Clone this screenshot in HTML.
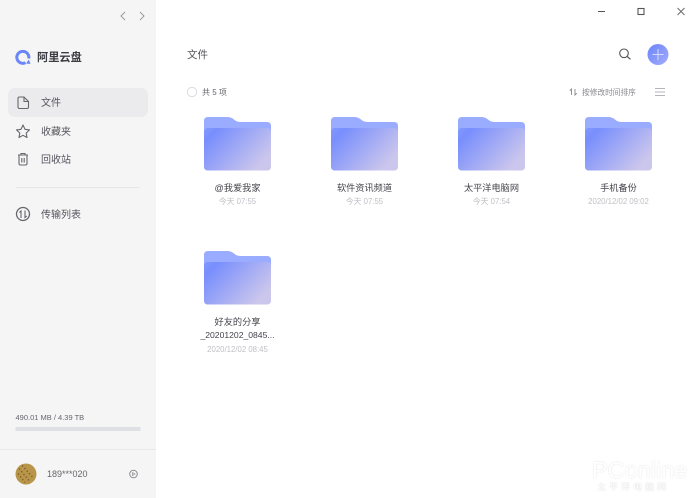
<!DOCTYPE html>
<html><head><meta charset="utf-8"><style>
html,body{margin:0;padding:0;width:700px;height:498px;overflow:hidden;background:#fff;font-family:"Liberation Sans","Noto Sans CJK SC",sans-serif}
.a{position:absolute;white-space:nowrap}
#side{position:absolute;left:0;top:0;width:156px;height:498px;background:#f5f5f5}
.nav{font-size:10px;color:#55555f;left:41px;line-height:14px}
.name{font-size:9.2px;color:#44444c;width:127px;text-align:center;line-height:14px}
.date{font-size:7.800px;color:#c0c0c6;width:127px;text-align:center;line-height:12px}
svg{position:absolute;overflow:visible}
</style></head><body>
<div id="side"></div>
<svg style="left:0;top:0" width="700" height="498" fill="none">
<defs>
<linearGradient id="g" x1="0" y1="0" x2="1" y2="0.6"><stop offset="0" stop-color="#8399fe"/><stop offset="0.15" stop-color="#788efd"/><stop offset="1" stop-color="#cbc6ec"/></linearGradient>
<symbol id="f" viewBox="0 0 67 54" overflow="visible">
<path d="M0 4Q0 0 4 0H23Q27 0 30 2.500L32 4Q34 5 37 5H63Q67 5 67 9V20H0Z" fill="#9aacff"/>
<rect x="0" y="11" width="67" height="42.500" rx="3.500" fill="url(#g)"/>
</symbol>
<linearGradient id="p" x1="0" y1="0" x2="1" y2="1"><stop offset="0" stop-color="#6b84fb"/><stop offset="1" stop-color="#a3adfa"/></linearGradient>
</defs>
<!-- nav arrows -->
<path d="M125 12L121 16L125 20M140 12L144 16L140 20" stroke="#9a9aa0" stroke-width="1"/>
<!-- logo -->
<path d="M25.500 62.700A6 6 0 1 1 28.700 58.500" stroke="#6a86f8" stroke-width="3"/>
<path d="M26 63.500L30.500 64L28.800 59.500Z" fill="#6a86f8"/>
<!-- active item -->
<rect x="8" y="88" width="140" height="29" rx="7" fill="#ebebed"/>
<!-- file icon -->
<path d="M19.500 97H24L28.500 101.500V107Q28.500 108.500 27 108.500H19.500Q18 108.500 18 107V98.500Q18 97 19.500 97ZM24 97V101.500H28.500" stroke="#66666c" stroke-width="1.100"/>
<!-- star -->
<path d="M23 125L25 129.300L29.500 129.900L26.200 133L27 137.500L23 135.300L19 137.500L19.800 133L16.500 129.900L21 129.300Z" stroke="#66666c" stroke-width="1.100" stroke-linejoin="round"/>
<!-- trash -->
<path d="M18 155H28M21 155V153.500H25V155M19 155.500V163.500Q19 165 20.500 165H25.500Q27 165 27 163.500V155.500M21.800 158V162.500M24.200 158V162.500" stroke="#66666c" stroke-width="1.100"/>
<!-- divider -->
<path d="M16 187.500H140" stroke="#e6e6e8"/>
<!-- transfer -->
<circle cx="23" cy="214" r="6.500" stroke="#66666c" stroke-width="1.300"/>
<path d="M21 218V211L19.300 212.500M25 210.500V217.500L26.700 216" stroke="#66666c" stroke-width="1.100"/>
<!-- storage -->
<rect x="15.500" y="427" width="125" height="4" fill="#dfe0e3"/>
<path d="M0 449.500H156" stroke="#e8e8ea"/>
<!-- avatar -->
<circle cx="26" cy="474" r="10.500" fill="#b9954a"/>
<path d="M19 468.500L29 480.500M22 465.500L33 477.500M18 473.500L25 482.500" stroke="#7b5f2c" stroke-width="1.300" stroke-dasharray="1.500 2"/>
<!-- settings -->
<circle cx="133.500" cy="474" r="3.800" stroke="#8a8a90"/>
<path d="M132.500 472.500L135 474L132.500 475.500Z" stroke="#8a8a90" stroke-width=".7"/>
<!-- window controls -->
<path d="M598 11.500H605" stroke="#555" stroke-width="1"/>
<rect x="638" y="8.500" width="6" height="6" stroke="#555" stroke-width="1.100"/>
<path d="M677.500 8L684.500 15M684.500 8L677.500 15" stroke="#666" stroke-width=".9"/>
<!-- search -->
<circle cx="624" cy="53.300" r="4.300" stroke="#55555a" stroke-width="1.100"/>
<path d="M627.200 56.500L630.500 59.300" stroke="#55555a" stroke-width="1.200"/>
<!-- plus -->
<circle cx="658" cy="54.500" r="10.500" fill="url(#p)"/>
<path d="M658 49V60M652.500 54.500H663.500" stroke="#d5dcff" stroke-width="1"/>
<!-- select -->
<circle cx="192" cy="92" r="4.700" stroke="#dcdcdf"/>
<!-- sort -->
<path d="M571.500 95V89L569.800 90.800M575 89V95L576.800 93.200" stroke="#88888e" stroke-width=".9"/>
<path d="M655 88.500H665M655 92H665M655 95.500H665" stroke="#b4b4ba"/>
<use href="#f" x="204" y="117" width="67" height="54"/>
<use href="#f" x="331" y="117" width="67" height="54"/>
<use href="#f" x="458" y="117" width="67" height="54"/>
<use href="#f" x="585" y="117" width="67" height="54"/>
<use href="#f" x="204" y="251" width="67" height="54"/>
</svg>
<div class="a" style="left:37px;top:49.500px;font-size:11.200px;font-weight:700;color:#3c3c44;line-height:16px">阿里云盘</div>
<div class="a nav" style="top:97px">文件</div>
<div class="a nav" style="top:126px">收藏夹</div>
<div class="a nav" style="top:154px">回收站</div>
<div class="a nav" style="top:209px">传输列表</div>
<div class="a" style="left:15.500px;top:411.500px;font-size:7.500px;color:#666670;line-height:12px">490.01 MB / 4.39 TB</div>
<div class="a" style="left:47px;top:468px;font-size:9px;color:#66666c;line-height:13px">189***020</div>
<div class="a" style="left:187px;top:48px;font-size:10.500px;color:#55555a;line-height:15px">文件</div>
<div class="a" style="left:202px;top:86.500px;font-size:8px;color:#66666c;line-height:12px">共 5 项</div>
<div class="a" style="left:582px;top:86.500px;font-size:7.700px;color:#88888e;line-height:12px">按修改时间排序</div>
<div class="a name" style="left:174px;top:180.500px">@我爱我家</div>
<div class="a date" style="left:174px;top:195.500px">今天 07:55</div>
<div class="a name" style="left:301px;top:180.500px">软件资讯频道</div>
<div class="a date" style="left:301px;top:195.500px">今天 07:55</div>
<div class="a name" style="left:428px;top:180.500px">太平洋电脑网</div>
<div class="a date" style="left:428px;top:195.500px">今天 07:54</div>
<div class="a name" style="left:555px;top:180.500px">手机备份</div>
<div class="a date" style="left:555px;top:195.500px">2020/12/02 09:02</div>
<div class="a name" style="left:174px;top:314.500px">好友的分享</div>
<div class="a name" style="left:174px;top:328px;font-size:8.600px">_20201202_0845...</div>
<div class="a date" style="left:174px;top:343.500px">2020/12/02 08:45</div>
<div class="a" style="left:592px;top:456px;font-size:23.500px;color:#fff;line-height:28px;text-shadow:0 0 1.500px #d8d8d8">PConline</div>
<div class="a" style="left:597px;top:481px;font-size:9px;letter-spacing:3px;color:#fff;line-height:12px;text-shadow:0 0 1.500px #ccc">太平洋电脑网</div>
</body></html>
